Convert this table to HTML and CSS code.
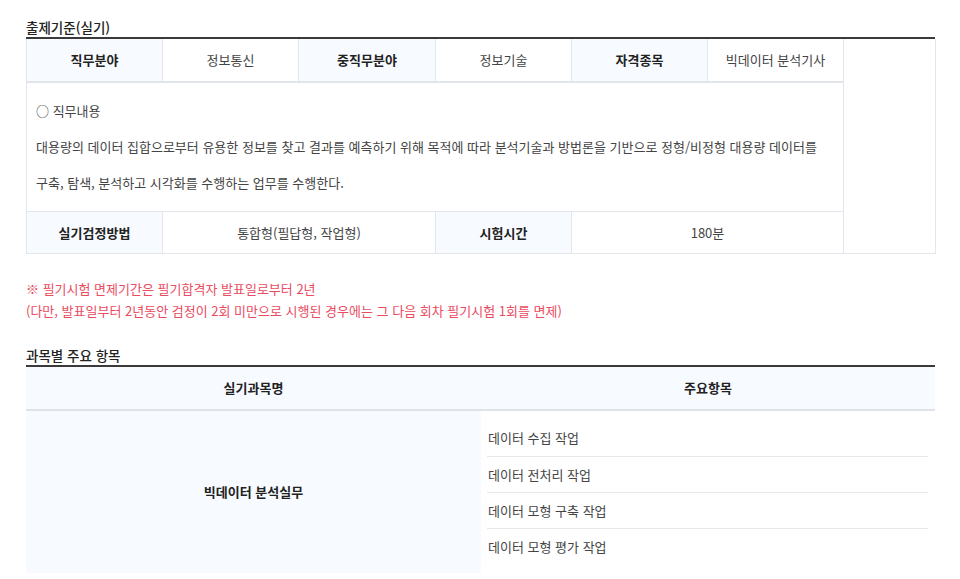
FILE: index.html
```html
<!DOCTYPE html>
<html lang="ko">
<head>
<meta charset="utf-8">
<link rel="stylesheet" href="styles.css">
</head>
<body>
<div class="page">
  <h3 class="sec-title">출제기준(실기)</h3>
  <table class="info">
    <colgroup>
      <col class="c136"><col class="c136"><col class="c137"><col class="c136"><col class="c136"><col class="c136"><col class="c92">
    </colgroup>
    <tr class="r1">
      <th>직무분야</th><td>정보통신</td>
      <th>중직무분야</th><td>정보기술</td>
      <th>자격종목</th><td>빅데이터 분석기사</td>
      <td class="blank" rowspan="3"></td>
    </tr>
    <tr>
      <td colspan="6" class="desc">
        <p>○ 직무내용</p>
        <p>대용량의 데이터 집합으로부터 유용한 정보를 찾고 결과를 예측하기 위해 목적에 따라 분석기술과 방법론을 기반으로 정형/비정형 대용량 데이터를</p>
        <p>구축, 탐색, 분석하고 시각화를 수행하는 업무를 수행한다.</p>
      </td>
    </tr>
    <tr class="r3">
      <th>실기검정방법</th><td colspan="2">통합형(필답형, 작업형)</td>
      <th>시험시간</th><td colspan="2">180분</td>
    </tr>
  </table>

  <div class="notice">
    <p>※ 필기시험 면제기간은 필기합격자 발표일로부터 2년</p>
    <p>(다만, 발표일부터 2년동안 검정이 2회 미만으로 시행된 경우에는 그 다음 회차 필기시험 1회를 면제)</p>
  </div>

  <h3 class="sec-title sec2">과목별 주요 항목</h3>
  <table class="subjects">
    <colgroup><col class="half1"><col class="half2"></colgroup>
    <tr class="head">
      <th>실기과목명</th><th>주요항목</th>
    </tr>
    <tr>
      <th class="subj">빅데이터 분석실무</th>
      <td class="items-cell">
        <ul class="items">
          <li>데이터 수집 작업</li>
          <li>데이터 전처리 작업</li>
          <li>데이터 모형 구축 작업</li>
          <li>데이터 모형 평가 작업</li>
        </ul>
      </td>
    </tr>
  </table>
</div>
</body>
</html>
```

FILE: styles.css
```css
* { box-sizing: border-box; }
html, body { margin: 0; padding: 0; background: #fff; }
body {
  font-family: "Noto Sans CJK KR", "Noto Sans", sans-serif;
  font-size: 13px;
  color: #444;
}
.page {
  padding: 17px 0 0 26px;
  width: 935px;
}
.sec-title {
  margin: 0;
  font-size: 13.5px;
  line-height: 20px;
  font-weight: 500;
  color: #222;
  border-bottom: 2px solid #3a3a3a;
  padding-bottom: 0;
  width: 909px;
}
table {
  border-collapse: collapse;
  table-layout: fixed;
  width: 909px;
}
.c136 { width: 136px; }
.c137 { width: 137px; }
.c92 { width: 92px; }
.info th, .info td {
  border: 1px solid #e3e6ea;
  text-align: center;
  vertical-align: middle;
  padding: 0;
  line-height: 20px;
}
.info tr:first-child th, .info tr:first-child td { border-top: none; }
.info th {
  background: #f7faff;
  color: #222;
  font-weight: 700;
}
.info td { color: #444; }
.info .r1 th, .info .r1 td { height: 43px; border-bottom: 2px solid #e1e4e9; }
.info .r1 td.blank { border-bottom: 1px solid #e3e6ea; }
.info .r3 th, .info .r3 td { height: 42px; }
.info td.desc {
  text-align: left;
  padding: 10px 9px;
}
.desc p {
  margin: 0;
  line-height: 36px;
}
.notice {
  margin-top: 24px;
  color: #ea4c5f;
}
.notice p {
  margin: 0;
  line-height: 22px;
}
.sec2 { margin-top: 23px; }
.half1 { width: 455px; }
.half2 { width: 454px; }
.subjects th, .subjects td {
  padding: 0;
  vertical-align: middle;
  line-height: 20px;
}
.subjects .head th {
  height: 43px;
  background: #f7faff;
  color: #222;
  font-weight: 700;
  text-align: center;
  border-bottom: 2px solid #dfe3e8;
}
.subjects th.subj {
  background: #f7faff;
  color: #222;
  font-weight: 700;
  text-align: center;
}
.items-cell { padding: 9px 7px 9px 6px !important; }
.items {
  list-style: none;
  margin: 0;
  padding: 0;
}
.items li {
  height: 36px;
  line-height: 36px;
  padding-left: 1px;
  color: #444;
  border-top: 1px solid #e6e8ec;
}
.items li:first-child { border-top: none; }
```
